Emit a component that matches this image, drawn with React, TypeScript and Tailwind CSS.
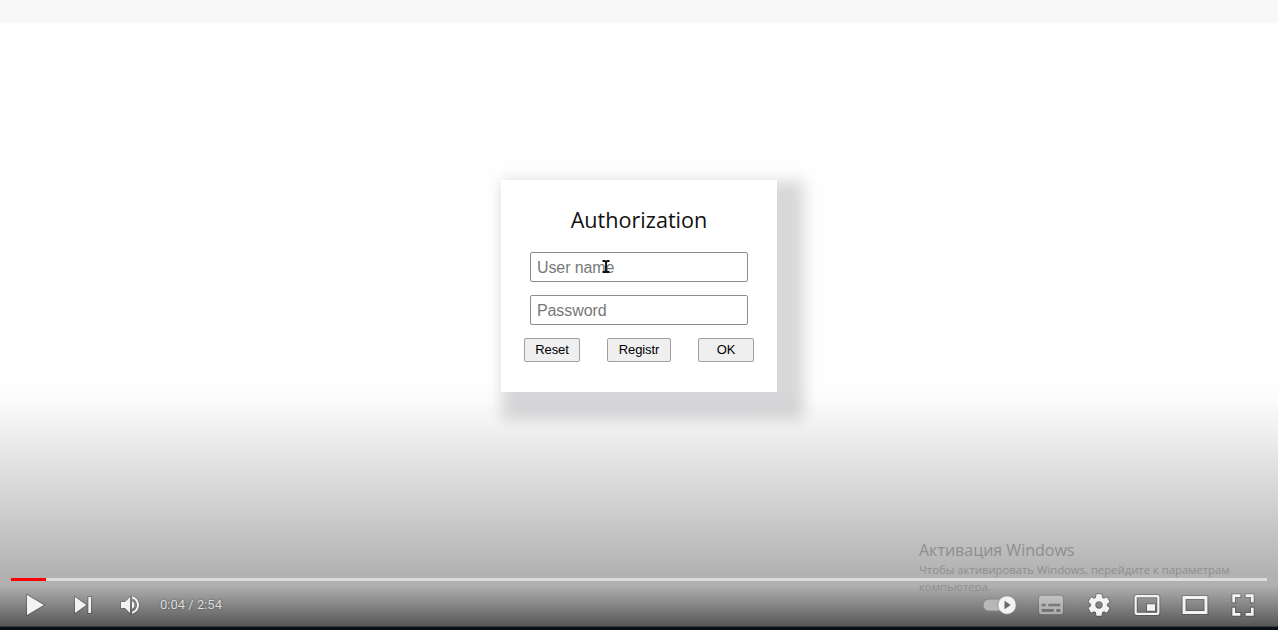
import type { ReactNode } from "react";

function Icon({ children, className = "" }: { children: ReactNode; className?: string }) {
  return (
    <svg
      viewBox="0 0 36 36"
      className={`size-12 shrink-0 fill-[#f3f3f3] [paint-order:stroke] stroke-black/20 stroke-[1.6] ${className}`}
      fillRule="evenodd"
    >
      {children}
    </svg>
  );
}

function AuthCard() {
  const button =
    "h-6 rounded-[2px] border border-[#a0a0a2] bg-[#efeff0] pb-px text-[13px] leading-none tracking-[-0.1px] text-black";
  const input =
    "block h-[30px] w-[218px] rounded-[2px] border border-[#8e8e90] bg-white px-1.5 pt-px text-base tracking-[-0.1px] text-black placeholder:text-[#777] placeholder:opacity-100";
  return (
    <form className="relative flex h-[212px] w-[276px] flex-col items-center bg-white font-['Liberation_Sans',Arial,sans-serif] shadow-[14px_14px_14px_13px_#d8d8da]">
      <h1 className="mt-[24px] h-8 font-['Open_Sans','Noto_Sans',sans-serif] text-[21.6px] leading-8 text-[#111]">
        Authorization
      </h1>
      <input className={`mt-4 ${input}`} placeholder="User name" />
      <input className={`mt-[13px] ${input}`} placeholder="Password" />
      <div className="mt-[13px] flex w-[230px] justify-between">
        <button type="button" className={`w-14 ${button}`}>Reset</button>
        <button type="button" className={`w-16 ${button}`}>Registr</button>
        <button type="button" className={`w-14 ${button}`}>OK</button>
      </div>
      <svg viewBox="0 0 10 13" className="absolute left-[100px] top-[80px] h-[13px] w-[10px]">
        <path d="M1.5 1h2.2L5 2l1.3-1h2.2M5 2v9M1.5 12h2.2L5 11l1.3 1h2.2" fill="none" stroke="#111" strokeWidth="1.9" />
      </svg>
    </form>
  );
}

function Watermark() {
  return (
    <div className="absolute left-[919px] top-[539px] w-[330px] font-['Open_Sans','Noto_Sans',sans-serif] text-[#8e8e8e]">
      <p className="h-[22px] whitespace-nowrap text-[16px] leading-[22px]">Активация Windows</p>
      <p className="whitespace-nowrap text-[11.3px] leading-[17px]">
        Чтобы активировать Windows, перейдите к параметрам
        <br />
        компьютера.
      </p>
    </div>
  );
}

function Controls() {
  return (
    <div className="flex h-12 items-center justify-between px-[11px]">
      <div className="flex items-center">
        <Icon>
          <path d="M12 25.5 24.6 18 12 10.5z" />
        </Icon>
        <Icon>
          <path d="M12,24 20.5,18 12,12V24z M22,12v12h2V12h-2z" />
        </Icon>
        <Icon className="ml-[6px] !size-9">
          <path d="M8,21L12,21L17,26L17,10L12,15L8,15L8,21Z M19,14L19,22C20.48,21.32 21.5,19.77 21.5,18C21.5,16.26 20.48,14.74 19,14Z M19,11.29C21.89,12.15 24,14.83 24,18C24,21.17 21.89,23.85 19,24.71L19,26.77C23.01,25.86 26,22.28 26,18C26,13.72 23.01,10.14 19,9.23L19,11.29Z" />
        </Icon>
        <span className="ml-[11px] font-[Roboto,sans-serif] text-[13px] text-[#dddddd] [text-shadow:0_0_2px_rgba(0,0,0,0.5)]">
          0:04 / 2:54
        </span>
      </div>
      <div className="flex items-center">
        <svg viewBox="0 0 48 48" className="size-12">
          <rect x="4" y="18" width="28" height="12" rx="6" fill="#b7b7b7" stroke="#858585" />
          <circle cx="28" cy="24" r="9.2" fill="#f3f3f3" stroke="#777" strokeWidth=".6" />
          <path d="M25.5 19.7v8.6l6.2-4.3z" fill="#686868" />
        </svg>
        <Icon className="opacity-45">
          <path d="M11,11C9.9,11 9,11.9 9,13L9,23C9,24.1 9.9,25 11,25L25,25C26.1,25 27,24.1 27,23L27,13C27,11.9 26.1,11 25,11Z M11,17h3v2h-3Z M20,23h-9v-2h9Z M25,23h-3v-2h3Z M25,19h-9v-2h9Z" />
        </Icon>
        <Icon>
          <path d="m23.94,18.78c.03,-.25 .05,-.51 .05,-.78 0,-.27 -.02,-.52 -.05,-.78l1.68,-1.32c.15,-.12 .19,-.33 .09,-.51l-1.6,-2.76c-.09,-.17 -.31,-.24 -.48,-.17l-1.99,.8c-.41,-.32 -.86,-.58 -1.35,-.78l-.30,-2.12c-.02,-.19 -.19,-.33 -.39,-.33l-3.2,0c-.2,0 -.36,.14 -.39,.33l-.30,2.12c-.48,.2 -.93,.47 -1.35,.78l-1.99,-.8c-.18,-.07 -.39,0 -.48,.17l-1.6,2.76c-.10,.17 -.05,.39 .09,.51l1.68,1.32c-.03,.25 -.05,.52 -.05,.78 0,.26 .02,.52 .05,.78l-1.68,1.32c-.15,.12 -.19,.33 -.09,.51l1.6,2.76c.09,.17 .31,.24 .48,.17l1.99,-.8c.41,.32 .86,.58 1.35,.78l.30,2.12c.02,.19 .19,.33 .39,.33l3.2,0c.2,0 .36,-.14 .39,-.33l.30,-2.12c.48,-.2 .93,-.47 1.35,-.78l1.99,.8c.18,.07 .39,0 .48,-.17l1.6,-2.76c.09,-.17 .05,-.39 -.09,-.51l-1.68,-1.32zm-5.94,2.01c-1.54,0 -2.8,-1.25 -2.8,-2.8 0,-1.54 1.25,-2.8 2.8,-2.8 1.54,0 2.8,1.25 2.8,2.8 0,1.54 -1.25,2.8 -2.8,2.8z" />
        </Icon>
        <Icon>
          <path d="M10.2,10.5H25.8Q27.3,10.5 27.3,12V24Q27.3,25.5 25.8,25.5H10.2Q8.7,25.5 8.7,24V12Q8.7,10.5 10.2,10.5Z M10.3,12.1V23.9H25.7V12.1Z M18,17.5h6v4.8h-6Z" />
        </Icon>
        <Icon>
          <path d="M27.3,11.3V24.7H8.7V11.3Z M10.9,13.5H25.1V22.5H10.9Z" />
        </Icon>
        <Icon>
          <path d="M10,16h2v-4h4v-2h-6z M20,10v2h4v4h2v-6z M24,24h-4v2h6v-6h-2z M12,20h-2v6h6v-2h-4z" />
        </Icon>
      </div>
    </div>
  );
}

export default function App() {
  return (
    <main className="relative h-[630px] w-[1278px] overflow-hidden bg-[#fefefe]">
      <div className="h-[23px] bg-[#f8f8f8]" />
      <div className="flex justify-center pt-[157px]">
        <AuthCard />
      </div>
      <div className="pointer-events-none absolute inset-x-0 bottom-0 h-[245px] bg-[linear-gradient(to_bottom,transparent_0,rgba(0,0,0,.01)_15px,rgba(0,0,0,.055)_45px,rgba(0,0,0,.12)_85px,rgba(0,0,0,.19)_125px,rgba(0,0,0,.26)_165px,rgba(0,0,0,.30)_190px,rgba(0,0,0,.31)_201px,rgba(0,0,0,.45)_217px,rgba(0,0,0,.67)_243px)]" />
      <Watermark />
      <div className="absolute inset-x-0 bottom-0">
        <div className="mx-[11px] h-[3px] bg-[#dcdcdc]">
          <div className="h-full w-[35px] bg-[#ff0000]" />
        </div>
        <Controls />
        <div className="-mt-[3px] h-1 border-t border-[#35393e] bg-[#0b1018]" />
      </div>
    </main>
  );
}
